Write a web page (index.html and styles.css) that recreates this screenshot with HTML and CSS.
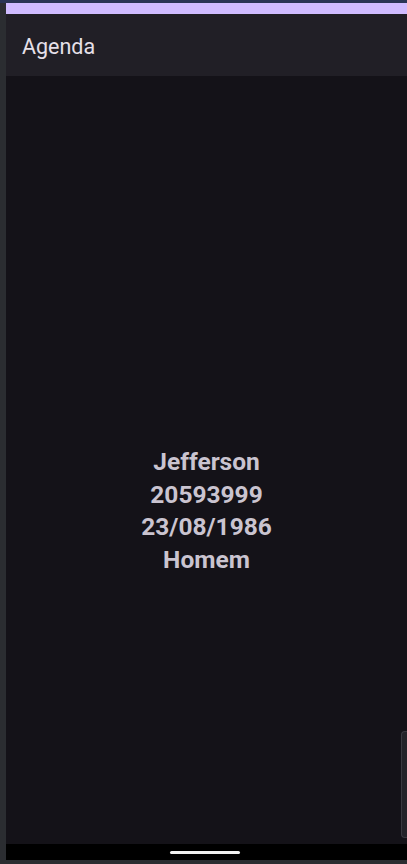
FILE: index.html
```html
<!DOCTYPE html>
<html lang="pt">
<head>
<meta charset="utf-8">
<title>Agenda</title>
<link rel="stylesheet" href="styles.css">
</head>
<body>
<div class="frame">
  <div class="top-strip"></div>
  <div class="row">
    <div class="left-strip"></div>
    <div class="screen">
      <div class="status"></div>
      <header class="appbar">Agenda</header>
      <main class="content">
        <div class="info">
          <div>Jefferson</div>
          <div>20593999</div>
          <div>23/08/1986</div>
          <div>Homem</div>
        </div>
        <div class="scroll-tab"></div>
      </main>
      <div class="navbar"><span class="handle"></span></div>
    </div>
  </div>
  <div class="bottom-strip"></div>
</div>
</body>
</html>
```
FILE: styles.css
```css
* { box-sizing: border-box; }
html, body { margin: 0; padding: 0; }
body {
  width: 407px;
  height: 864px;
  overflow: hidden;
  background: #2b2d31;
  font-family: Roboto, "Noto Sans", sans-serif;
}
.frame {
  display: flex;
  flex-direction: column;
  height: 864px;
}
.top-strip {
  height: 3px;
  background: #2a3554;
}
.row {
  display: flex;
  flex: 1;
}
.left-strip {
  width: 6px;
  background: #2b2d31;
}
.screen {
  flex: 1;
  display: flex;
  flex-direction: column;
}
.status {
  height: 11px;
  background: #d0bcff;
}
.appbar {
  height: 62px;
  background: #211f26;
  color: #e6e0e9;
  font-size: 21.5px;
  padding-left: 16px;
  display: flex;
  align-items: center;
  padding-top: 2px;
}
.content {
  flex: 1;
  position: relative;
  background: #141218;
  padding-top: 370px;
}
.info {
  text-align: center;
  color: #cac4d0;
  font-weight: 700;
  font-size: 24.5px;
  line-height: 32.5px;
}
.scroll-tab {
  position: absolute;
  right: 0;
  top: 655px;
  width: 6px;
  height: 107px;
  background: #242329;
  border: 1px solid #3a3940;
  border-right: none;
  border-radius: 4px 0 0 4px;
}
.navbar {
  height: 16px;
  background: #000;
  display: flex;
  justify-content: center;
  align-items: center;
}
.handle {
  width: 70px;
  height: 3px;
  border-radius: 2px;
  background: #f2f2f2;
  margin-right: 4px;
}
.bottom-strip {
  height: 4px;
  background: #2b2d31;
}
```
